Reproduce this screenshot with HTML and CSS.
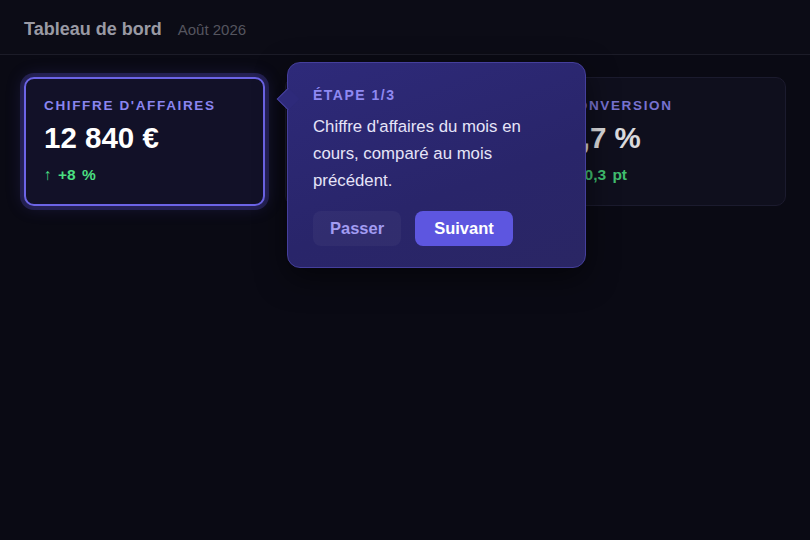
FILE: index.html
```html
<!DOCTYPE html>
<html lang="fr">
<head>
<meta charset="utf-8">
<link rel="stylesheet" href="styles.css">
</head>
<body>
<header class="topbar">
  <h1 class="title">Tableau de bord</h1>
  <span class="period">Août 2026</span>
</header>
<main class="content">
  <div class="cards">
    <section class="card card-active">
      <div class="label">Chiffre d'affaires</div>
      <div class="value">12 840 €</div>
      <div class="delta">↑ +8 %</div>
    </section>
    <section class="card card-dim"></section>
    <section class="card card-dim">
      <div class="label">Conversion</div>
      <div class="value">3,7 %</div>
      <div class="delta">↓ -0,3 pt</div>
    </section>
  </div>
  <div class="tour">
    <div class="tour-step">Étape 1/3</div>
    <p class="tour-text">Chiffre d'affaires du mois en cours, comparé au mois précédent.</p>
    <div class="tour-actions">
      <button class="btn btn-ghost">Passer</button>
      <button class="btn btn-primary">Suivant</button>
    </div>
  </div>
</main>
</body>
</html>
```
FILE: styles.css
```css
* { box-sizing: border-box; }
html, body { margin: 0; height: 100%; }
body {
  background: #0a0a14;
  font-family: "Liberation Sans", Arial, sans-serif;
  color: #fff;
  overflow: hidden;
}
.topbar {
  height: 55px;
  display: flex;
  align-items: center;
  gap: 16px;
  padding: 4px 24px 0;
  border-bottom: 1px solid #1c1c28;
  background: #0c0c16;
}
.title {
  margin: 0;
  font-size: 18px;
  font-weight: 700;
  color: #9a9aa4;
}
.period {
  font-size: 15px;
  color: #55555f;
}
.content {
  position: relative;
  padding: 22px 24px;
}
.cards {
  display: grid;
  grid-template-columns: repeat(3, 1fr);
  gap: 20px;
}
.card {
  height: 129px;
  border-radius: 10px;
  padding: 20px 19px;
  background: #11101f;
  border: 1px solid #1f1e33;
}
.card-active {
  border: 2px solid #6c64e6;
  padding: 19px 18px;
  box-shadow: 0 0 0 4px rgba(88, 80, 210, 0.28), 0 0 18px rgba(88, 80, 210, 0.25);
  background: #121128;
}
.card-dim { opacity: 0.85; }
.label {
  font-size: 13.5px;
  font-weight: 700;
  letter-spacing: 1.65px;
  text-transform: uppercase;
  color: #8a85f0;
}
.value {
  margin-top: 8px;
  font-size: 29.5px;
  font-weight: 700;
  color: #fff;
}
.delta {
  margin-top: 11px;
  font-size: 15.5px;
  font-weight: 700;
  word-spacing: 2px;
  color: #4ade80;
}
.tour {
  position: absolute;
  left: 287px;
  top: 7px;
  width: 299px;
  height: 206px;
  padding: 24px 25px 22px;
  border-radius: 13px;
  background: linear-gradient(160deg, #2e2a7a 0%, #29256a 60%, #2a2664 100%);
  border: 1px solid #453f9c;
  box-shadow: 0 10px 30px rgba(0, 0, 0, 0.5);
}
.tour::before {
  content: "";
  position: absolute;
  left: -8px;
  top: 28px;
  width: 15px;
  height: 15px;
  background: #2e2a7a;
  border-left: 1px solid #453f9c;
  border-bottom: 1px solid #453f9c;
  transform: rotate(45deg);
}
.tour-step {
  font-size: 14px;
  font-weight: 700;
  letter-spacing: 1.5px;
  text-transform: uppercase;
  color: #8f89f2;
}
.tour-text {
  margin: 10px 0 0;
  font-size: 16.8px;
  line-height: 27px;
  color: #e6e4f8;
}
.tour-actions {
  display: flex;
  gap: 14px;
  margin-top: 17px;
}
.btn {
  height: 35px;
  border: none;
  border-radius: 8px;
  font-family: inherit;
  font-size: 16.5px;
  font-weight: 700;
  padding: 0 17px;
}
.btn-ghost {
  background: rgba(255, 255, 255, 0.04);
  color: #a29cf2;
}
.btn-primary {
  padding: 0 19px;
  background: #5d56e0;
  color: #fff;
}
```
